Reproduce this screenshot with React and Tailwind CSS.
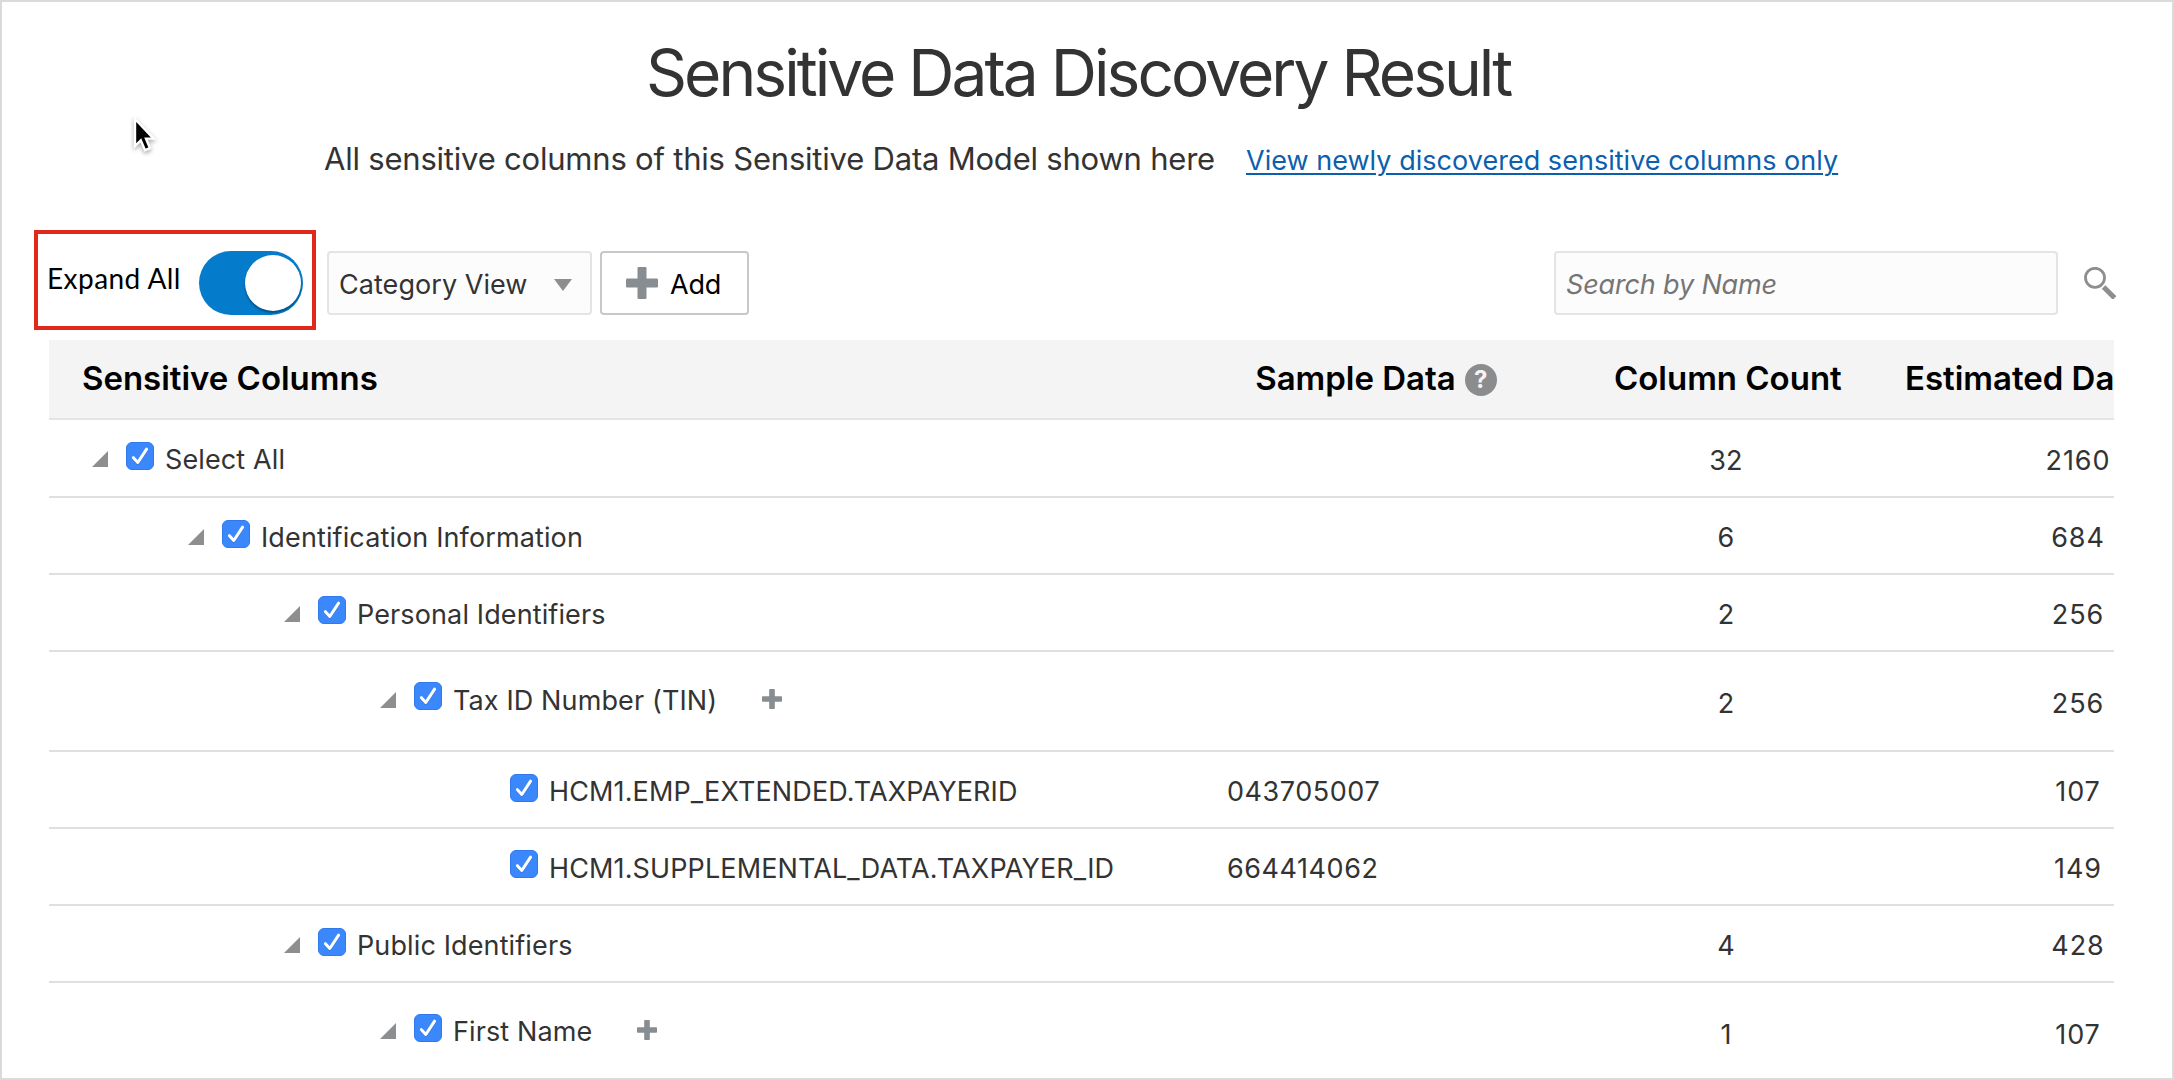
const COLUMNS = 'grid grid-cols-[1167px_320px_380px_324px] w-[2191px]';

const INDENT = ['pl-[43px]', 'pl-[139px]', 'pl-[235px]', 'pl-[331px]', 'pl-[427px]'];

const ROWS = [
  { level: 0, label: 'Select All', count: '32', estimate: '2160', expandable: true, height: 'h-[78px]', box: 'mt-[22px]', value: 'mt-[25px]' },
  { level: 1, label: 'Identification Information', count: '6', estimate: '684', expandable: true, height: 'h-[77px]', box: 'mt-[22px]', value: 'mt-[24px]' },
  { level: 2, label: 'Personal Identifiers', count: '2', estimate: '256', expandable: true, height: 'h-[77px]', box: 'mt-[21px]', value: 'mt-[24px]' },
  { level: 3, label: 'Tax ID Number (TIN)', count: '2', estimate: '256', expandable: true, addable: true, height: 'h-[100px]', box: 'mt-[30px]', value: 'mt-[36px]' },
  { level: 4, label: 'HCM1.EMP_EXTENDED.TAXPAYERID', sample: '043705007', estimate: '107', height: 'h-[77px]', box: 'mt-[22px]', value: 'mt-[24px]' },
  { level: 4, label: 'HCM1.SUPPLEMENTAL_DATA.TAXPAYER_ID', sample: '664414062', estimate: '149', height: 'h-[77px]', box: 'mt-[21px]', value: 'mt-[24px]' },
  { level: 2, label: 'Public Identifiers', count: '4', estimate: '428', expandable: true, height: 'h-[77px]', box: 'mt-[22px]', value: 'mt-[24px]' },
  { level: 3, label: 'First Name', count: '1', estimate: '107', expandable: true, addable: true, height: 'h-[100px]', box: 'mt-[31px]', value: 'mt-[36px]' },
];

function Plus({ className }) {
  return (
    <svg viewBox="0 0 32 32" className={className} fill="#878d91">
      <rect x="11.5" y="0" width="9" height="32" rx="1.2" />
      <rect x="0" y="11.5" width="32" height="9" rx="1.2" />
    </svg>
  );
}

function Checkbox({ className }) {
  return (
    <span className={`block h-7 w-7 shrink-0 rounded-[6px] border border-[#3079ef] bg-[#3b88fd] ${className}`}>
      <svg viewBox="0 0 26 26" className="h-full w-full" fill="none">
        <path d="M6.4 15.7 L10.8 20.5 L19.6 7.2" stroke="#2f6fd6" strokeWidth="3" strokeLinecap="round" strokeLinejoin="round" opacity="0.6" />
        <path d="M6.4 14.7 L10.8 19.5 L19.6 6.2" stroke="#fff" strokeWidth="3" strokeLinecap="round" strokeLinejoin="round" />
      </svg>
    </span>
  );
}

function TreeRow({ row }) {
  return (
    <div className={`${COLUMNS} ${row.height} border-b-2 border-[#e0e0e0] text-[27px] leading-8 tracking-[0.12px] text-[#333]`}>
      <div className={`flex items-start ${INDENT[row.level]}`}>
        <svg viewBox="0 0 16 16" className={`h-4 w-4 shrink-0 ${row.addable ? 'mt-[40px]' : 'mt-[31px]'}`}>
          {row.expandable && <path d="M16 0 V16 H0 Z" fill="#8c8e90" />}
        </svg>
        <Checkbox className={`ml-[18px] ${row.box}`} />
        <span className={`ml-[11px] whitespace-nowrap ${row.addable ? 'mt-[33px]' : 'mt-[24px]'}`}>{row.label}</span>
        {row.addable && <Plus className="ml-[45px] mt-[37px] h-5 w-5 shrink-0" />}
      </div>
      <div className={`pl-[11px] tracking-[0.55px] ${row.value}`}>{row.sample}</div>
      <div className={`text-center ${row.value}`}>{row.count}</div>
      <div className={`text-center tracking-[0.9px] ${row.value}`}>{row.estimate}</div>
    </div>
  );
}

export default function App() {
  return (
    <div className="relative h-[1080px] w-[2174px] overflow-hidden border-2 border-[#dadada] bg-white font-['Inter','Liberation_Sans',sans-serif]">
      <h1 className="ml-[644px] mt-[31px] whitespace-nowrap text-[64px] font-normal leading-[80px] tracking-[-2.96px] text-[#333]">
        Sensitive Data Discovery Result
      </h1>

      <div className="ml-[322px] mt-[26px] flex h-10 items-baseline whitespace-nowrap leading-10">
        <span className="text-[31px] tracking-[-0.21px] text-[#333]">All sensitive columns of this Sensitive Data Model shown here</span>
        <a href="#" className="ml-[31px] text-[27px] tracking-[0.03px] text-[#0b5fae] underline decoration-2 underline-offset-[3px]">
          View newly discovered sensitive columns only
        </a>
      </div>

      <div className="ml-8 mt-[51px] flex h-[100px] items-start">
        <div className="flex h-[100px] w-[282px] items-start border-4 border-[#e1291b] pl-[9px]">
          <span className="mt-7 w-[152px] whitespace-nowrap font-['Lato','Liberation_Sans',sans-serif] text-[28px] leading-8 tracking-[0.45px] text-black">
            Expand All
          </span>
          <span className="mt-[17px] flex h-16 w-[104px] items-center justify-end rounded-full bg-[#047bcb] pr-[2px]">
            <span className="mb-px h-14 w-14 rounded-full bg-white shadow-[0_2px_2px_rgba(0,0,0,0.35)]" />
          </span>
        </div>

        <div className="ml-[11px] mt-[21px] flex h-16 w-[265px] items-center justify-between rounded-[4px] border-2 border-[#e4e4e4] bg-[#fcfcfc] pl-[10px] pr-[18px] text-[27px] leading-8 text-[#333]">
          <span className="mt-[4px] tracking-[0.05px]">Category View</span>
          <svg viewBox="0 0 18 12" className="mt-[4px] h-3 w-[18px]"><path d="M0 0 H18 L9 12 Z" fill="#8c8e90" /></svg>
        </div>

        <button className="ml-2 mt-[21px] flex h-16 w-[149px] items-center rounded-[4px] border-2 border-[#c8c8c8] bg-white pl-6 text-[27px] leading-8 text-black">
          <Plus className="h-8 w-8" />
          <span className="ml-3 mt-[4px] tracking-[-0.2px]">Add</span>
        </button>

        <input
          placeholder="Search by Name"
          className="ml-auto mt-[21px] h-16 w-[504px] rounded-[4px] border-2 border-[#e4e4e4] bg-[#fcfcfc] pl-[10px] pt-[2px] text-[27px] italic tracking-[-0.15px] placeholder:text-[#757575]"
        />
        <svg viewBox="0 0 32 32" className="ml-[26px] mr-14 mt-[37px] h-8 w-8" fill="none" stroke="#8c8e90">
          <circle cx="11" cy="10.8" r="9.5" strokeWidth="2.8" />
          <path d="M19.6 20 L30.6 31" strokeWidth="5" />
        </svg>
      </div>

      <div className="ml-[47px] mt-[10px] w-[2065px] overflow-hidden">
        <div className={`${COLUMNS} h-20 border-b-2 border-[#e4e4e4] bg-[#f4f4f4] pt-[18px] text-[33px] font-semibold leading-10 tracking-[-0.02px] text-black`}>
          <div className="whitespace-nowrap pl-[33px]">Sensitive Columns</div>
          <div className="flex items-start justify-center whitespace-nowrap">
            <span>Sample Data</span>
            <span className="ml-[9px] mt-[6px] flex h-8 w-8 items-center justify-center rounded-full bg-[#8a8c8e] text-[24px] font-bold leading-8 tracking-normal text-[#f4f4f4]">?</span>
          </div>
          <div className="whitespace-nowrap pl-[78px]">Column Count</div>
          <div className="-ml-[11px] whitespace-nowrap">Estimated Data Count</div>
        </div>
        {ROWS.map((row) => (
          <TreeRow key={row.label} row={row} />
        ))}
      </div>

      <svg viewBox="0 0 30 44" className="absolute left-[128px] top-[111px] h-[44px] w-[30px] overflow-visible drop-shadow-[0_2px_2px_rgba(0,0,0,0.35)]">
        <path d="M5 6 V33 L10.8 27.4 L15 37.2 L20 35.2 L16 25.6 H23.6 Z" fill="#000" stroke="#fff" strokeWidth="2.4" strokeLinejoin="miter" />
      </svg>
    </div>
  );
}
